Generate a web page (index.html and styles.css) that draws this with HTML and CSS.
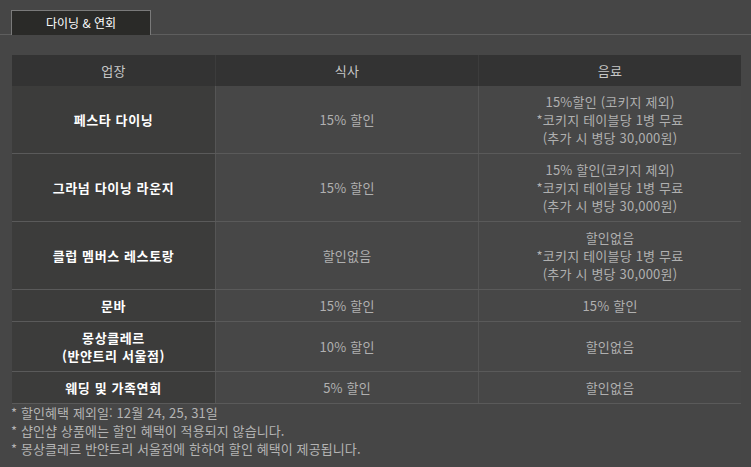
FILE: index.html
```html
<!DOCTYPE html>
<html lang="ko">
<head>
<meta charset="utf-8">
<link rel="stylesheet" href="styles.css">
</head>
<body>
<div class="tabs">
  <div class="tab">다이닝 &amp; 연회</div>
</div>
<div class="content">
  <table class="dining">
    <thead>
      <tr><th>업장</th><th>식사</th><th>음료</th></tr>
    </thead>
    <tbody>
      <tr><td class="name">페스타 다이닝</td><td>15% 할인</td><td>15%할인 (코키지 제외)<br>*코키지 테이블당 1병 무료<br>(추가 시 병당 30,000원)</td></tr>
      <tr><td class="name">그라넘 다이닝 라운지</td><td>15% 할인</td><td>15% 할인(코키지 제외)<br>*코키지 테이블당 1병 무료<br>(추가 시 병당 30,000원)</td></tr>
      <tr><td class="name">클럽 멤버스 레스토랑</td><td>할인없음</td><td>할인없음<br>*코키지 테이블당 1병 무료<br>(추가 시 병당 30,000원)</td></tr>
      <tr><td class="name">문바</td><td>15% 할인</td><td>15% 할인</td></tr>
      <tr><td class="name">몽상클레르<br>(반얀트리 서울점)</td><td>10% 할인</td><td>할인없음</td></tr>
      <tr><td class="name">웨딩 및 가족연회</td><td>5% 할인</td><td>할인없음</td></tr>
    </tbody>
  </table>
  <ul class="notes">
    <li>* 할인혜택 제외일: 12월 24, 25, 31일</li>
    <li>* 샵인샵 상품에는 할인 혜택이 적용되지 않습니다.</li>
    <li>* 몽상클레르 반얀트리 서울점에 한하여 할인 혜택이 제공됩니다.</li>
  </ul>
</div>
</body>
</html>
```

FILE: styles.css
```css
html, body {
  margin: 0;
  padding: 0;
  background: #464646;
  font-family: "Noto Sans CJK KR", "Noto Sans", sans-serif;
  font-size: 13px;
  color: #b4b4b4;
}

.tabs {
  padding: 10px 0 0 11px;
  border-bottom: 1px solid #5e5e5e;
  display: flex;
}

.tab {
  width: 138px;
  height: 24px;
  background: #2a2a28;
  border: 1px solid #7a7a7a;
  border-bottom: none;
  color: #ffffff;
  font-size: 12px;
  line-height: 24px;
  text-align: center;
  margin-bottom: -1px;
}

.content {
  padding: 20px 10px 0 12px;
}

.dining {
  width: 729px;
  border-collapse: collapse;
  table-layout: fixed;
}

.dining th, .dining td {
  text-align: center;
  line-height: 18px;
  padding: 7px 0 6px;
  font-weight: normal;
  letter-spacing: 0.2px;
}

.dining th {
  background: #333333;
  color: #c8c8c8;
  border-left: 1px solid #3c3c3c;
}

.dining th:first-child { width: 203px; border-left: none; }
.dining th:nth-child(2) { width: 262px; }

.dining td {
  background: #474747;
  border-bottom: 1px solid #5a5a5a;
  border-left: 1px solid #555555;
  color: #b0b0b0;
}

.dining td.name {
  background: #3c3c3b;
  border-left: none;
  color: #ffffff;
  font-weight: bold;
  letter-spacing: 0.6px;
}

.notes {
  list-style: none;
  margin: 0 0 0 -1px;
  padding: 0;
  line-height: 18px;
  font-size: 13px;
  letter-spacing: 0.1px;
  color: #b4b4b4;
}
```
